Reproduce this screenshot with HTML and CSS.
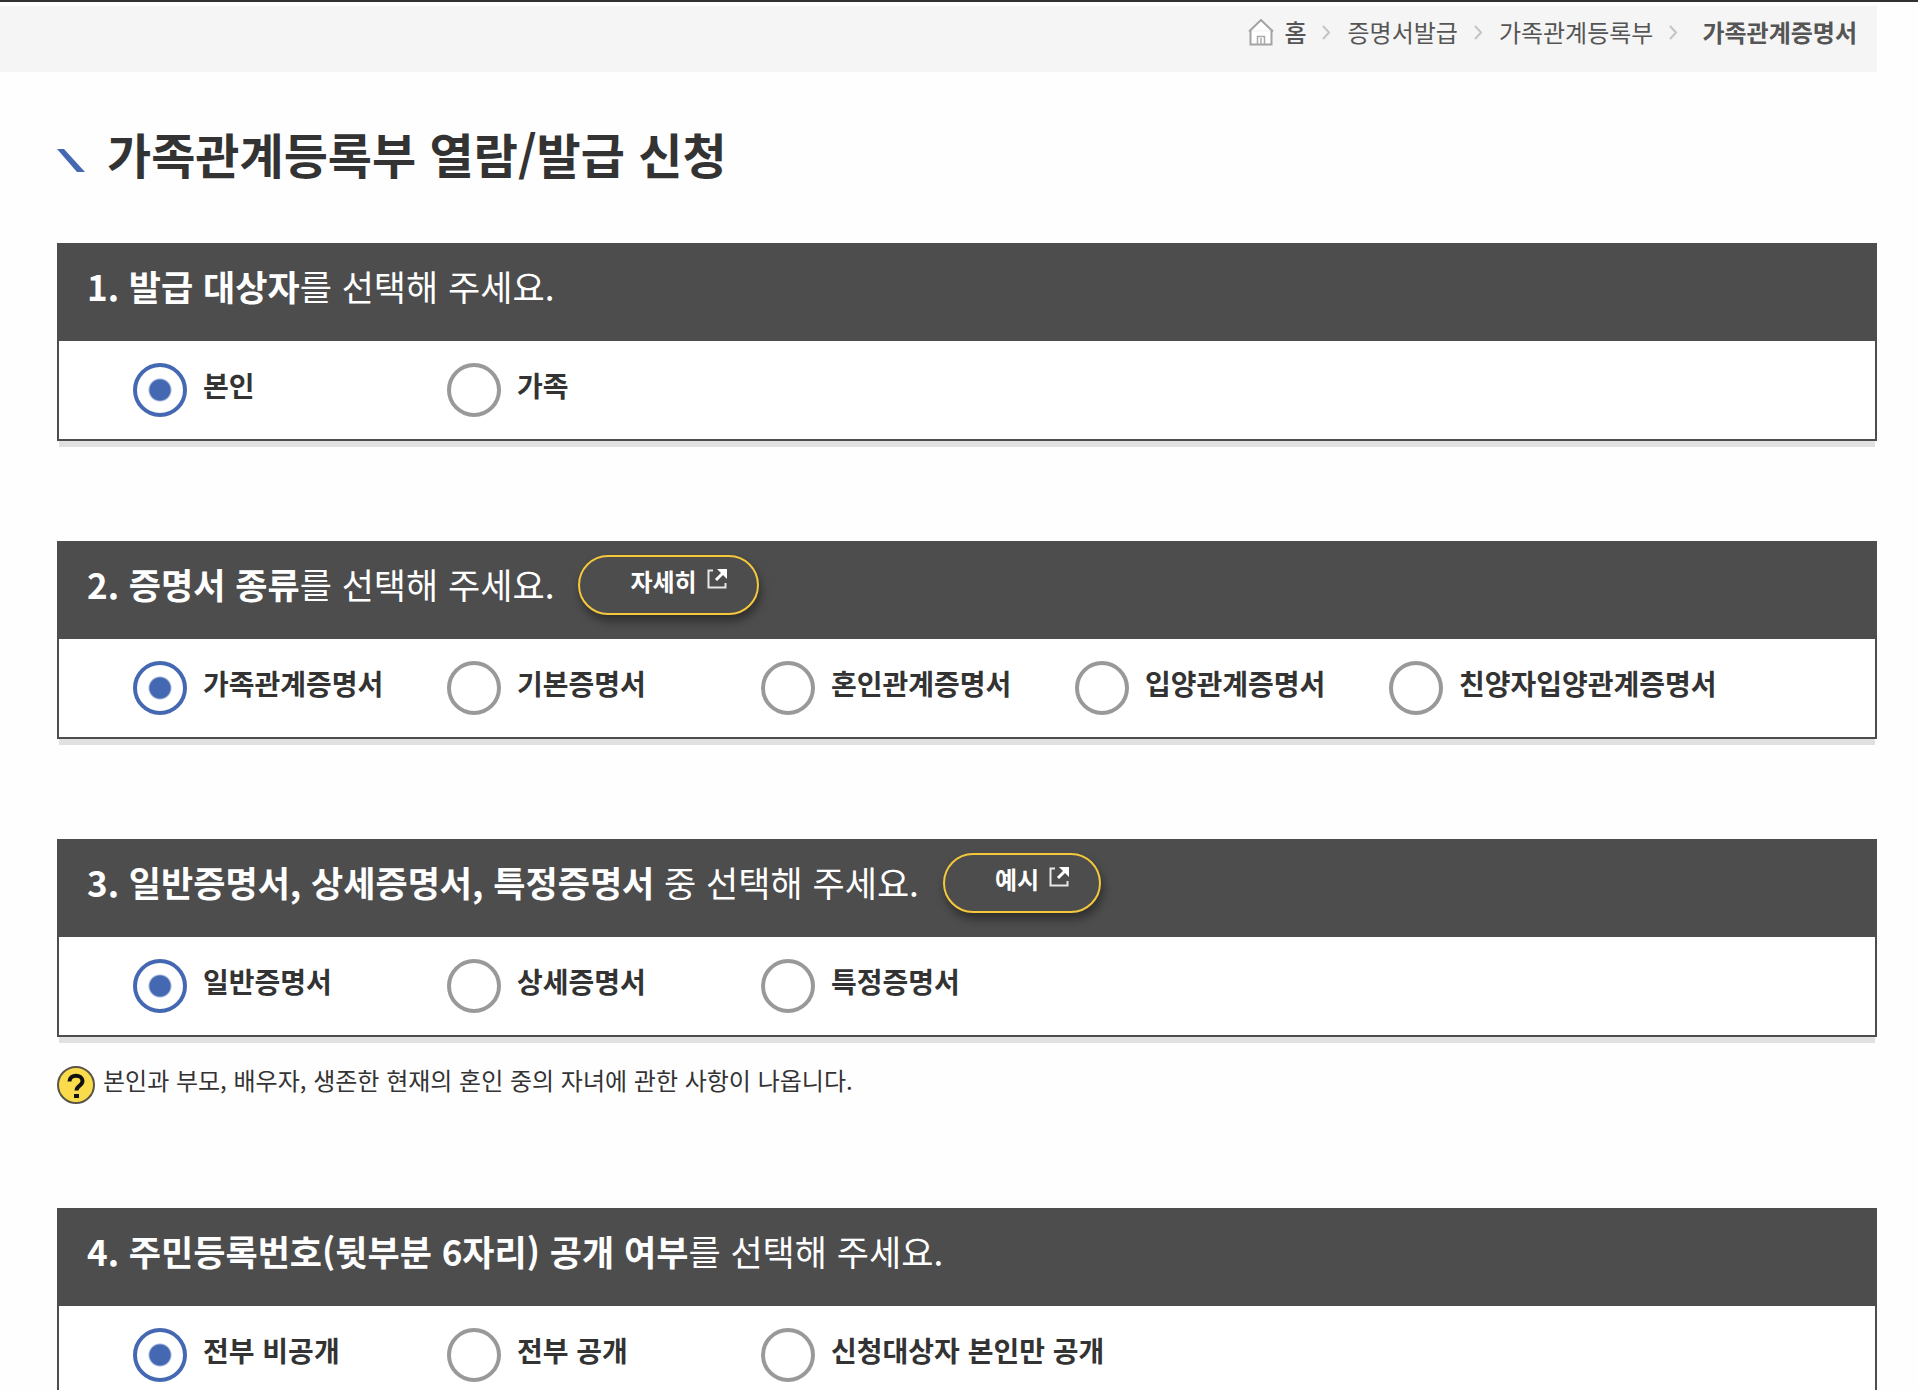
FILE: index.html
```html
<!DOCTYPE html>
<html lang="ko">
<head>
<meta charset="utf-8">
<meta name="viewport" content="width=device-width, initial-scale=1">
<title>가족관계등록부 열람/발급 신청</title>
<link rel="stylesheet" href="styles.css">
</head>
<body>
<svg class="defs" width="0" height="0" aria-hidden="true">
  <symbol id="chevron" viewBox="0 0 9 15"><path d="M1 1l6 6.500-6 6.500" fill="none" stroke="#c4c4c4" stroke-width="2"/></symbol>
  <symbol id="popup" viewBox="0 0 20 20"><path d="M6 1.500H1.500v17h17V14" fill="none" stroke="#e8e8e8" stroke-width="2"/><path d="M9 11l7-7" fill="none" stroke="#fff" stroke-width="3"/><path d="M10 0h10v10z" fill="#fff"/></symbol>
</svg>
<div class="page">
  <nav class="crumbs" aria-label="현재 위치">
    <a class="crumb home" href="#">
      <svg width="26" height="27" viewBox="0 0 26 27" aria-hidden="true"><path d="M1 12.500L13 1l12 11.500M2.500 11v14.500h21V11" fill="#fff" stroke="#a3a3a3" stroke-width="2"/><path d="M9.500 25.500v-8h7v8M13 19v7" fill="none" stroke="#a9a9a9" stroke-width="1.500"/></svg>
      <span>홈</span>
    </a>
    <svg width="9" height="15" aria-hidden="true"><use href="#chevron"/></svg>
    <a class="crumb" href="#">증명서발급</a>
    <svg width="9" height="15" aria-hidden="true"><use href="#chevron"/></svg>
    <a class="crumb" href="#">가족관계등록부</a>
    <svg width="9" height="15" aria-hidden="true"><use href="#chevron"/></svg>
    <strong class="crumb current">가족관계증명서</strong>
  </nav>

  <main class="content">
    <h1 class="title">
      <svg width="28" height="23" viewBox="0 0 28 23" aria-hidden="true"><path d="M0 0h7l21 23h-8z" fill="#4469b2"/></svg>
      <span>가족관계등록부 열람/발급 신청</span>
    </h1>

    <section class="step">
      <div class="step-head"><h2><strong>1. 발급 대상자</strong>를 선택해 주세요.</h2></div>
      <div class="options">
        <label class="option"><input type="radio" name="target" checked><span>본인</span></label>
        <label class="option"><input type="radio" name="target"><span>가족</span></label>
      </div>
    </section>

    <section class="step">
      <div class="step-head">
        <h2><strong>2. 증명서 종류</strong>를 선택해 주세요.</h2>
        <button class="pill" type="button"><span>자세히</span><svg width="20" height="20" aria-hidden="true"><use href="#popup"/></svg></button>
      </div>
      <div class="options">
        <label class="option"><input type="radio" name="kind" checked><span>가족관계증명서</span></label>
        <label class="option"><input type="radio" name="kind"><span>기본증명서</span></label>
        <label class="option"><input type="radio" name="kind"><span>혼인관계증명서</span></label>
        <label class="option"><input type="radio" name="kind"><span>입양관계증명서</span></label>
        <label class="option"><input type="radio" name="kind"><span>친양자입양관계증명서</span></label>
      </div>
    </section>

    <section class="step with-help">
      <div class="step-head">
        <h2><strong>3. 일반증명서, 상세증명서, 특정증명서</strong> 중 선택해 주세요.</h2>
        <button class="pill" type="button"><span>예시</span><svg width="20" height="20" aria-hidden="true"><use href="#popup"/></svg></button>
      </div>
      <div class="options">
        <label class="option"><input type="radio" name="detail" checked><span>일반증명서</span></label>
        <label class="option"><input type="radio" name="detail"><span>상세증명서</span></label>
        <label class="option"><input type="radio" name="detail"><span>특정증명서</span></label>
      </div>
    </section>
    <p class="help">
      <svg width="38" height="38" viewBox="0 0 38 38" aria-hidden="true"><circle cx="19" cy="19" r="18" fill="#f9db4c" stroke="#5a5548" stroke-width="2"/><path d="M12.500 15.500c0-8 13-7.500 13-.5 0 4.500-6 5-6 9.500" fill="none" stroke="#111" stroke-width="4"/><rect x="17" y="28" width="5" height="4" fill="#111"/></svg>
      <span>본인과 부모, 배우자, 생존한 현재의 혼인 중의 자녀에 관한 사항이 나옵니다.</span>
    </p>

    <section class="step">
      <div class="step-head"><h2><strong>4. 주민등록번호(뒷부분 6자리) 공개 여부</strong>를 선택해 주세요.</h2></div>
      <div class="options">
        <label class="option"><input type="radio" name="reveal" checked><span>전부 비공개</span></label>
        <label class="option"><input type="radio" name="reveal"><span>전부 공개</span></label>
        <label class="option"><input type="radio" name="reveal"><span>신청대상자 본인만 공개</span></label>
      </div>
    </section>
  </main>
</div>
</body>
</html>
```
FILE: styles.css
```css
* { box-sizing: border-box; }

body {
  margin: 0;
  background: #fefefe;
  color: #333;
  font-family: "Noto Sans CJK KR", sans-serif;
}

.defs { position: absolute; }

.page {
  height: 100vh;
  overflow-y: auto;
  scrollbar-width: none;
  border-top: 2px solid #333031;
  padding: 4px 41px 0 0;
}

.crumbs {
  display: flex;
  justify-content: flex-end;
  align-items: center;
  gap: 16px;
  height: 66px;
  padding: 0 20px 14px 0;
  background: #f5f5f5;
}

.crumb {
  color: #555;
  font-size: 24px;
  line-height: 36px;
  text-decoration: none;
}

.home {
  display: flex;
  align-items: center;
  gap: 10px;
  font-weight: 500;
}

.current { margin-left: 8px; }

.content { padding-left: 57px; }

.title {
  display: flex;
  align-items: center;
  gap: 22px;
  margin: 0;
  padding: 45px 0 54px;
  font-size: 48px;
  line-height: 72px;
}

.title svg { margin-top: 14px; }

.step {
  margin-bottom: 100px;
  border: 2px solid #4d4d4d;
  background: #fff;
  box-shadow: 0 8px 0 -2px #e1e1e1;
}

.step-head {
  display: flex;
  align-items: center;
  gap: 24px;
  height: 96px;
  padding: 0 28px 12px;
  background: #4d4d4d;
  color: #fff;
}

.step-head h2 {
  margin: 0;
  padding-bottom: 2px;
  font-size: 35px;
  font-weight: 400;
  line-height: 52px;
}

.pill {
  display: flex;
  align-items: center;
  gap: 10px;
  height: 60px;
  padding: 0 30px 8px 50px;
  border: 2px solid #f5c83c;
  border-radius: 30px;
  background: #4d4d4d;
  box-shadow: 2px 6px 10px rgba(0, 0, 0, 0.4);
  color: #fff;
  font: 700 24px/36px "Noto Sans CJK KR", sans-serif;
}

.pill svg { margin-bottom: 4px; }

.options {
  display: flex;
  flex-wrap: wrap;
  padding: 22px 0 22px 74px;
}

.option {
  display: flex;
  align-items: center;
  gap: 16px;
  min-width: 314px;
  font-size: 28px;
  font-weight: 700;
  line-height: 42px;
}

.option span { padding-bottom: 10px; }

.option input {
  appearance: none;
  width: 54px;
  height: 54px;
  margin: 0;
  border: 4px solid #999;
  border-radius: 50%;
  background: #fff;
}

.option input:checked {
  border-color: #4469b2;
  background: radial-gradient(circle, #4469b2 10px, #fff 12px);
}

.with-help { margin-bottom: 19px; }

.help {
  display: flex;
  align-items: center;
  gap: 8px;
  margin: 0 0 104px;
  font-size: 24px;
  line-height: 36px;
}

.help svg { margin-top: 10px; }
```
